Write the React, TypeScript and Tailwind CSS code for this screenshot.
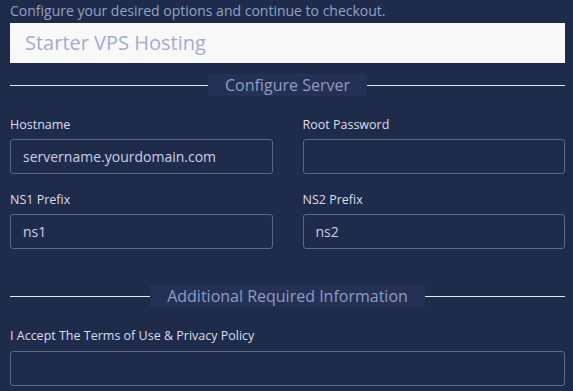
const font = { fontFamily: '"Open Sans", "Noto Sans", sans-serif' }

function SectionTitle({ title, width }: { title: string; width: string }) {
  return (
    <div className="flex items-center h-[22px]">
      <div className="flex-1 h-px bg-[#e6e9f2]" />
      <div className={`${width} h-[22px] flex items-center justify-center bg-[#243154] text-[16px] leading-[22px] text-[#8f9cc4]`}>
        {title}
      </div>
      <div className="flex-1 h-px bg-[#e6e9f2]" />
    </div>
  )
}

function Field({ label, value }: { label: string; value?: string }) {
  return (
    <div className="flex flex-col">
      <label className="text-[12.5px] leading-[18px] text-[#d9dfef] mb-[5px]">{label}</label>
      <div className="h-[35px] rounded-[3px] border border-[#5d6888] flex items-center px-[12px] text-[14px] text-[#c9d0e6]">
        {value}
      </div>
    </div>
  )
}

export default function App() {
  return (
    <div className="w-[573px] h-[391px] overflow-hidden bg-[#1f2b4b] pl-[10px] pr-[8px]" style={font}>
      <p className="text-[14px] leading-[23px] text-[#93a1c8] h-[23px] -mt-[1px] mb-[1px]">
        Configure your desired options and continue to checkout.
      </p>
      <div className="h-[40px] bg-[#f8f8f8] flex items-center pl-[15px] text-[20px] text-[#a3acd0]">
        Starter VPS Hosting
      </div>

      <div className="mt-[11px]">
        <SectionTitle title="Configure Server" width="w-[159px]" />
      </div>

      <div className="grid grid-cols-2 gap-x-[30px] gap-y-[17px] mt-[20px]">
        <Field label="Hostname" value="servername.yourdomain.com" />
        <Field label="Root Password" />
        <Field label="NS1 Prefix" value="ns1" />
        <Field label="NS2 Prefix" value="ns2" />
      </div>

      <div className="mt-[36px]">
        <SectionTitle title="Additional Required Information" width="w-[275px]" />
      </div>

      <div className="mt-[20px] flex flex-col">
        <label className="text-[12.5px] leading-[18px] text-[#d9dfef] mb-[6px]">
          I Accept The Terms of Use &amp; Privacy Policy
        </label>
        <div className="h-[35px] rounded-[3px] border border-[#5d6888]" />
      </div>
    </div>
  )
}
